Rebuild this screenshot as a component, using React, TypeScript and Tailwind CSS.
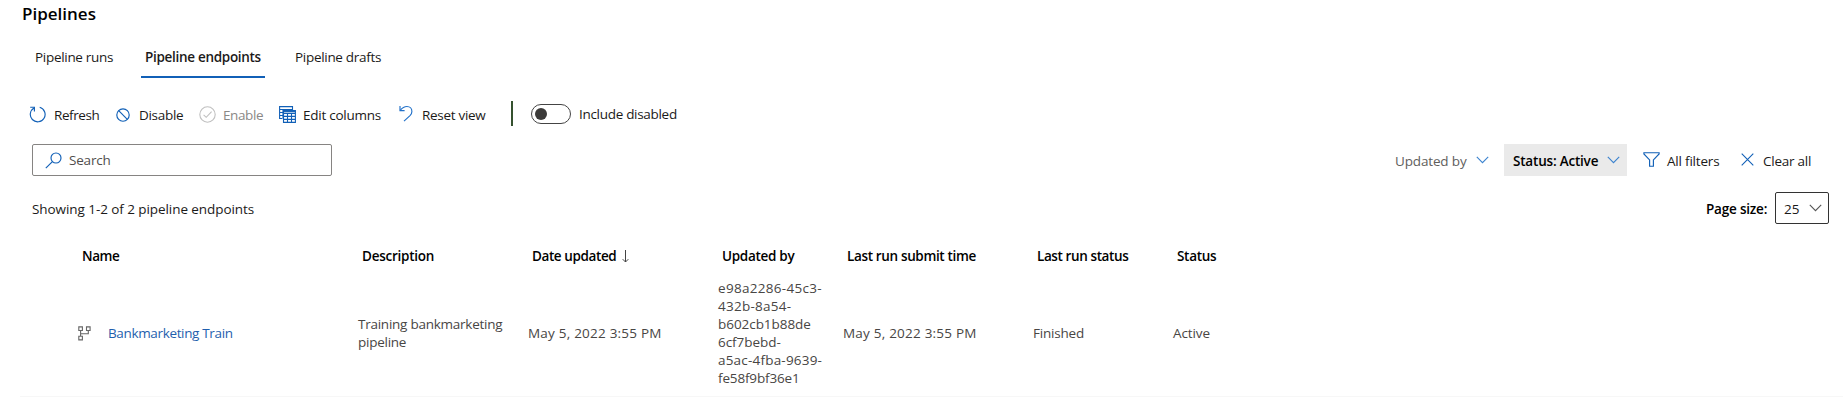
import React from "react";

const BLUE = "#1160b7";

function Chevron({ color = "#3b83cf" }: { color?: string }) {
  return (
    <svg className="h-[8px] w-[13px] shrink-0" viewBox="0 0 13 8" fill="none" stroke={color} strokeWidth="1.1">
      <path d="M0.8 0.8 6.5 6.6 12.2 0.8" />
    </svg>
  );
}

function RefreshIcon() {
  return (
    <svg className="mb-[2px] h-[17px] w-[17px] shrink-0" viewBox="0 0 17 17" fill="none" stroke={BLUE} strokeWidth="1.15">
      <path d="M10.7 1.3A7.4 7.4 0 1 1 5.2 1.9" />
      <path d="M1.2 1.2H5.4V5.4" />
    </svg>
  );
}

function DisableIcon() {
  return (
    <svg className="mb-[1px] h-[14px] w-[14px] shrink-0" viewBox="0 0 14 14" fill="none" stroke={BLUE} strokeWidth="1.15">
      <circle cx="7" cy="7" r="6.2" />
      <path d="M2.7 2.7 11.3 11.3" />
    </svg>
  );
}

function EnableIcon() {
  return (
    <svg className="mb-[2px] h-[17px] w-[17px] shrink-0" viewBox="0 0 17 17" fill="none" stroke="#c0c0c0" strokeWidth="1.1">
      <circle cx="8.5" cy="8.5" r="7.7" />
      <path d="M4.6 8.8 7.2 11.3 12.6 5.7" />
    </svg>
  );
}

function ColumnsIcon() {
  return (
    <svg className="mb-[2px] h-[17px] w-[17px] shrink-0" viewBox="0 0 17 17" fill="none" stroke={BLUE} strokeWidth="1.1">
      <path d="M3.5 12.5H0.6V0.6H13.5V4M0.6 3.5H13.5M0.6 6.5H4M0.6 9.5H4M4 3.5V12" />
      <path d="M4.5 4.6H16.4V16.4H4.5ZM4.5 7.4H16.4M4.5 10.4H16.4M4.5 13.4H16.4M8.5 7.4V16.4M12.5 7.4V16.4" />
      <path d="M4.5 5.6H16.4" />
    </svg>
  );
}

function ResetIcon() {
  return (
    <svg className="mb-[3px] h-[17px] w-[14px] shrink-0" viewBox="0 0 14 17" fill="none" stroke="#2271c9" strokeWidth="1.15">
      <path d="M1 1V5.6H5.6" />
      <path d="M1.2 5.4C3.6 2.4 5.4 1.5 7.9 1.5C11 1.5 12.9 3.8 12.9 6.5C12.9 8.4 12.1 9.5 11 10.6L5 16.2" />
    </svg>
  );
}

function SearchIcon() {
  return (
    <svg className="h-[17px] w-[17px] shrink-0" viewBox="0 0 17 17" fill="none" stroke={BLUE} strokeWidth="1.15">
      <circle cx="11" cy="6" r="5" />
      <path d="M7.4 9.6 0.8 16.2" />
    </svg>
  );
}

function FilterIcon() {
  return (
    <svg className="mb-[1px] h-[15px] w-[17px] shrink-0" viewBox="0 0 17 15" fill="none" stroke={BLUE} strokeWidth="1.15">
      <path d="M0.9 0.7H16.1V1.9L10.4 7.9V14.2H6.6V7.9L0.9 1.9Z" />
    </svg>
  );
}

function ClearIcon() {
  return (
    <svg className="mb-[1px] h-[13px] w-[13px] shrink-0" viewBox="0 0 13 13" fill="none" stroke={BLUE} strokeWidth="1.1">
      <path d="M0.7 0.7 12.3 12.3M12.3 0.7 0.7 12.3" />
    </svg>
  );
}

function PipelineIcon() {
  return (
    <svg className="mt-[2px] h-[15px] w-[13px] shrink-0" viewBox="0 0 13 15" fill="none" stroke="#666" strokeWidth="1.1">
      <path d="M0.8 0.9H4.4V4.5H0.8ZM8.5 0.9H12.1V4.5H8.5ZM0.8 10.3H4.4V13.9H0.8ZM2.6 4.5V10.3M10.3 4.5V7.7H2.6" />
    </svg>
  );
}

function SortIcon() {
  return (
    <svg className="h-[13px] w-[7px] shrink-0" viewBox="0 0 7 13" fill="none" stroke="#444" strokeWidth="1">
      <path d="M3.5 0V12M0.7 9.2 3.5 12 6.3 9.2" />
    </svg>
  );
}

const columns =
  "grid grid-cols-[280px_170px_190px_125px_190px_140px_1fr] whitespace-nowrap";

export default function App() {
  return (
    <div className="flex h-[408px] w-[1843px] flex-col overflow-hidden bg-white font-['Open_Sans','Noto_Sans',sans-serif] text-[13.5px] text-[#1b1a19]">
      <h1 className="h-[38px] pl-[22px] text-[17px] leading-[27px] font-semibold text-black">Pipelines</h1>

      <nav className="flex h-[40px] pl-[23px] leading-[38px] whitespace-nowrap">
        <div className="w-[118px] pl-3 tracking-[-0.3px]">Pipeline runs</div>
        <div className="w-[124px] border-b-2 border-[#1160b7] pl-1 font-semibold tracking-[-0.3px]">Pipeline endpoints</div>
        <div className="pl-[30px] tracking-[-0.3px]">Pipeline drafts</div>
      </nav>

      <div className="mt-[18px] flex h-[38px] items-center pl-[29px] whitespace-nowrap">
        <div className="flex w-[87px] items-center gap-2"><RefreshIcon /><span className="tracking-[-0.4px]">Refresh</span></div>
        <div className="flex w-[83px] items-center gap-[9px]"><DisableIcon /><span className="tracking-[-0.3px]">Disable</span></div>
        <div className="flex w-[80px] items-center gap-[7px] text-[#8a8886]"><EnableIcon /><span className="tracking-[-0.4px]">Enable</span></div>
        <div className="flex w-[120px] items-center gap-[7px]"><ColumnsIcon /><span className="tracking-[-0.25px]">Edit columns</span></div>
        <div className="flex w-[112px] items-center gap-[9px]"><ResetIcon /><span className="tracking-[-0.3px]">Reset view</span></div>
        <div className="mb-[3px] h-[25px] w-[2px] bg-[#35512f]" />
        <div className="mb-[2px] ml-[18px] flex h-5 w-10 items-center rounded-full border border-[#444] pl-[3px]">
          <div className="h-3 w-3 rounded-full bg-[#3b3a39]" />
        </div>
        <span className="mb-[2px] ml-2 tracking-[-0.3px]">Include disabled</span>
      </div>

      <div className="mt-[10px] flex h-8 items-center pl-8 whitespace-nowrap">
        <div className="flex h-8 w-[300px] items-center gap-[7px] rounded-[2px] border border-[#868482] pl-3 text-[#504e4c]">
          <SearchIcon /><span className="tracking-[-0.2px]">Search</span>
        </div>
        <div className="ml-[1063px] flex w-[109px] items-center text-[#605e5c]">
          <span className="mt-[2px] w-[81px] tracking-[-0.15px]">Updated by</span><Chevron />
        </div>
        <div className="flex h-8 w-[123px] items-center bg-[#eaeaea] pl-[9px] font-semibold text-black">
          <span className="mt-[2px] w-[94px] tracking-[-0.2px]">Status: Active</span><Chevron />
        </div>
        <div className="ml-4 flex w-[98px] items-center gap-[7px]"><FilterIcon /><span className="mt-[2px] tracking-[-0.2px]">All filters</span></div>
        <div className="flex items-center gap-[9px]"><ClearIcon /><span className="mt-[2px] tracking-[-0.25px]">Clear all</span></div>
      </div>

      <div className="mt-4 flex h-8 items-center pl-8 whitespace-nowrap">
        <span className="mt-[2px] w-[1674px] tracking-[-0.07px]">Showing 1-2 of 2 pipeline endpoints</span>
        <span className="mt-[2px] w-[69px] font-semibold tracking-[-0.2px] text-black">Page size:</span>
        <div className="flex h-8 w-[54px] items-center rounded-[2px] border border-[#333] pl-2">
          <span className="mt-[2px] w-[25px]">25</span><Chevron color="#555" />
        </div>
      </div>

      <div className={`${columns} mt-4 h-8 items-center pl-[82px] font-semibold text-black`}>
        <span className="tracking-[-0.4px]">Name</span>
        <span className="tracking-[-0.25px]">Description</span>
        <span className="flex items-center"><span className="w-[90px] tracking-[-0.4px]">Date updated</span><SortIcon /></span>
        <span className="tracking-[-0.3px]">Updated by</span>
        <span className="tracking-[-0.35px]">Last run submit time</span>
        <span className="tracking-[-0.4px]">Last run status</span>
        <span className="tracking-[-0.3px]">Status</span>
      </div>

      <div className={`${columns} ml-5 h-[125px] items-center border-b border-[#f7f7f7] pb-[3px] pl-[58px] leading-[18px] text-[#484644]`}>
        <div className="flex items-center gap-[17px]">
          <PipelineIcon /><span className="tracking-[-0.35px] text-[#1f5fae]">Bankmarketing Train</span>
        </div>
        <div className="tracking-[-0.25px]">Training bankmarketing<br />pipeline</div>
        <div className="tracking-[0.22px]">May 5, 2022 3:55 PM</div>
        <div className="tracking-[-0.05px]">
          <div className="tracking-[0.3px]">e98a2286-45c3-</div>
          <div className="tracking-[0.25px]">432b-8a54-</div>
          <div>b602cb1b88de</div>
          <div>6cf7bebd-</div>
          <div className="tracking-[0.2px]">a5ac-4fba-9639-</div>
          <div className="tracking-[-0.15px]">fe58f9bf36e1</div>
        </div>
        <div className="tracking-[0.22px]">May 5, 2022 3:55 PM</div>
        <div className="tracking-[-0.2px]">Finished</div>
        <div className="tracking-[-0.1px]">Active</div>
      </div>
    </div>
  );
}
